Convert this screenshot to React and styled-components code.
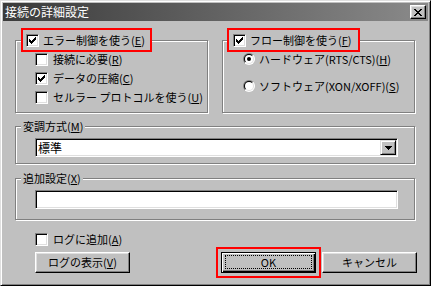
import React, { useId } from "react";
import styled, { createGlobalStyle } from "styled-components";

const GlobalStyle = createGlobalStyle`
  html, body { margin: 0; padding: 0; background: #c0c0c0; }
  body {
    font-family: "Noto Sans CJK JP", "Noto Sans", sans-serif;
    font-size: 11px;
    color: #000;
  }
  *, *::before, *::after { box-sizing: border-box; }
`;

const FACE = "#c0c0c0";

const Window = styled.div`
  width: 431px;
  height: 286px;
  display: flex;
  flex-direction: column;
  background: ${FACE};
  border: 1px solid;
  border-color: #dfdfdf #000 #000 #dfdfdf;
  box-shadow: inset 1px 1px #fff, inset -1px -1px #808080;
  padding: 2px;
  overflow: hidden;
`;

const TitleBar = styled.div`
  height: 18px;
  flex: none;
  display: flex;
  align-items: center;
  justify-content: space-between;
  padding: 0 2px;
  background: linear-gradient(to right, #3a3a3a, #8a8a8a);
`;

const Title = styled.span`
  color: #fff;
  font-size: 12px;
  line-height: 18px;
  white-space: nowrap;
`;

const CloseButton = styled.span`
  width: 16px;
  height: 14px;
  display: flex;
  align-items: center;
  justify-content: center;
  background: ${FACE};
  border: 1px solid;
  border-color: #fff #000 #000 #fff;
  box-shadow: inset -1px -1px #808080, inset 1px 1px #dfdfdf;
`;

const Body = styled.div`
  display: flex;
  flex-direction: column;
  padding: 19px 13px 0 12px;
`;

const TopRow = styled.div`
  display: flex;
  gap: 14px;
`;

const GroupBox = styled.div`
  flex: 1;
  display: flex;
  flex-direction: column;
  border: 1px solid #808080;
  box-shadow: inset 1px 1px #fff, 1px 1px #fff;
  margin-top: ${(p) => p.$mt || 0}px;
  padding-bottom: ${(p) => p.$pb || 0}px;
`;

const CheckCaption = styled.div`
  align-self: flex-start;
  width: ${(p) => p.$w}px;
  height: 24px;
  margin: -13px 0 0 ${(p) => p.$ml}px;
  padding: 0 ${(p) => p.$pl}px;
  display: flex;
  align-items: center;
  gap: 4px;
  background: ${FACE};
  border: 2px solid #f00;
`;

const TextCaption = styled.div`
  align-self: flex-start;
  line-height: 14px;
  margin: -8px 0 0 5px;
  padding: 0 2px;
  background: ${FACE};
  white-space: nowrap;
`;

const OptionList = styled.div`
  display: flex;
  flex-direction: column;
  gap: ${(p) => p.$gap}px;
  margin: 1px 0 0 ${(p) => p.$indent}px;
`;

const OptionRow = styled.div`
  display: flex;
  align-items: center;
  gap: ${(p) => p.$gap}px;
  height: ${(p) => p.$h}px;
`;

const Label = styled.span`
  line-height: 13px;
  white-space: nowrap;
`;

const CheckBox = styled.span`
  width: 13px;
  height: 13px;
  flex: none;
  display: block;
  background: #fff;
  border: 1px solid;
  border-color: #808080 #fff #fff #808080;
  box-shadow: inset 1px 1px #000, inset -1px -1px #dfdfdf;
  svg { display: block; }
`;

const Sunken = styled.div`
  height: 19px;
  display: flex;
  align-items: stretch;
  background: #fff;
  border: 1px solid;
  border-color: #808080 #fff #fff #808080;
  box-shadow: inset 1px 1px #000, inset -1px -1px #dfdfdf;
  padding: 1px;
  margin: 5px 16px 0 19px;
`;

const FieldText = styled.span`
  flex: 1;
  padding-left: 1px;
  line-height: 15px;
  font-size: 12px;
`;

const DropButton = styled.span`
  width: 16px;
  display: flex;
  align-items: center;
  justify-content: center;
  background: ${FACE};
  border: 1px solid;
  border-color: #dfdfdf #000 #000 #dfdfdf;
  box-shadow: inset 1px 1px #fff, inset -1px -1px #808080;
`;

const BottomRow = styled.div`
  display: flex;
  align-items: flex-end;
  justify-content: space-between;
  margin: 13px -2px 0 20px;
`;

const LeftColumn = styled.div`
  display: flex;
  flex-direction: column;
  align-items: flex-start;
  gap: 6px;
  padding-bottom: 5px;
`;

const RightGroup = styled.div`
  display: flex;
  align-items: center;
  gap: 1px;
`;

const Highlight = styled.div`
  border: 2px solid #f00;
  padding: 3px;
  display: flex;
`;

const Button = styled.button`
  width: 95px;
  height: 21px;
  padding: 0;
  font: inherit;
  font-size: 11px;
  color: #000;
  background: ${FACE};
  border: 1px solid;
  border-color: #fff #000 #000 #fff;
  box-shadow: inset -1px -1px #808080, inset 1px 1px #dfdfdf;
  display: flex;
  align-items: center;
  justify-content: center;
  line-height: 13px;
  white-space: nowrap;
`;

const DefaultButton = styled(Button)`
  border: 1px solid #000;
  box-shadow: inset 1px 1px #fff, inset -1px -1px #000, inset -2px -2px #808080;
  padding: 2px 3px 3px 3px;
  align-items: stretch;
`;

const FocusRect = styled.span`
  flex: 1;
  display: flex;
  align-items: center;
  justify-content: center;
  border: 1px dotted #000;
`;

const Check = ({ checked }) => (
  <CheckBox>
    {checked && (
      <svg width="11" height="11" viewBox="0 0 11 11" shapeRendering="crispEdges">
        <path
          fill="#000"
          d="M8 2h1v1h-1z M7 3h2v1h-2z M2 4h1v1h-1z M6 4h3v1h-3z M2 5h2v1h-2z M5 5h3v1h-3z M2 6h5v1h-5z M3 7h3v1h-3z M4 8h1v1h-1z"
        />
      </svg>
    )}
  </CheckBox>
);

const Radio = ({ checked }) => {
  const raw = useId();
  const id = "r" + raw.replace(/[^a-zA-Z0-9]/g, "");
  return (
    <svg width="12" height="12" viewBox="0 0 12 12" style={{ flex: "none", display: "block" }}>
      <defs>
        <linearGradient id={id + "a"} x1="0" y1="0" x2="1" y2="1">
          <stop offset="0.5" stopColor="#808080" />
          <stop offset="0.5" stopColor="#ffffff" />
        </linearGradient>
        <linearGradient id={id + "b"} x1="0" y1="0" x2="1" y2="1">
          <stop offset="0.5" stopColor="#000000" />
          <stop offset="0.5" stopColor="#dfdfdf" />
        </linearGradient>
      </defs>
      <circle cx="6" cy="6" r="6" fill={`url(#${id}a)`} />
      <circle cx="6" cy="6" r="5" fill={`url(#${id}b)`} />
      <circle cx="6" cy="6" r="4" fill="#fff" />
      {checked && <circle cx="6" cy="6" r="2" fill="#000" />}
    </svg>
  );
};

const CloseIcon = () => (
  <svg width="8" height="7" viewBox="0 0 8 7" shapeRendering="crispEdges">
    <path
      fill="#000"
      d="M0 0h2v1h-2z M6 0h2v1h-2z M1 1h2v1h-2z M5 1h2v1h-2z M2 2h4v1h-4z M3 3h2v1h-2z M2 4h4v1h-4z M1 5h2v1h-2z M5 5h2v1h-2z M0 6h2v1h-2z M6 6h2v1h-2z"
    />
  </svg>
);

const DownArrow = () => (
  <svg width="7" height="4" viewBox="0 0 7 4" shapeRendering="crispEdges">
    <path fill="#000" d="M0 0h7v1h-7z M1 1h5v1h-5z M2 2h3v1h-3z M3 3h1v1h-1z" />
  </svg>
);

const CheckOption = ({ checked, children }) => (
  <OptionRow $gap={5} $h={13}>
    <Check checked={checked} />
    <Label>{children}</Label>
  </OptionRow>
);

const RadioOption = ({ checked, children }) => (
  <OptionRow $gap={4} $h={12}>
    <Radio checked={checked} />
    <Label>{children}</Label>
  </OptionRow>
);

export default function App() {
  return (
    <>
      <GlobalStyle />
      <Window>
        <TitleBar>
          <Title>接続の詳細設定</Title>
          <CloseButton>
            <CloseIcon />
          </CloseButton>
        </TitleBar>
        <Body>
          <TopRow>
            <GroupBox $pb={8}>
              <CheckCaption $w={131} $ml={5} $pl={3}>
                <Check checked />
                <Label>
                  エラー制御を使う(<u>E</u>)
                </Label>
              </CheckCaption>
              <OptionList $gap={6} $indent={19}>
                <CheckOption>
                  接続に必要(<u>R</u>)
                </CheckOption>
                <CheckOption checked>
                  データの圧縮(<u>C</u>)
                </CheckOption>
                <CheckOption>
                  セルラー プロトコルを使う(<u>U</u>)
                </CheckOption>
              </OptionList>
            </GroupBox>
            <GroupBox $pb={8}>
              <CheckCaption $w={133} $ml={4} $pl={4}>
                <Check checked />
                <Label>
                  フロー制御を使う(<u>F</u>)
                </Label>
              </CheckCaption>
              <OptionList $gap={15} $indent={20}>
                <RadioOption checked>
                  ハードウェア(RTS/CTS)(<u>H</u>)
                </RadioOption>
                <RadioOption>
                  ソフトウェア(XON/XOFF)(<u>S</u>)
                </RadioOption>
              </OptionList>
            </GroupBox>
          </TopRow>

          <GroupBox $mt={13} $pb={6}>
            <TextCaption>
              変調方式(<u>M</u>)
            </TextCaption>
            <Sunken>
              <FieldText>標準</FieldText>
              <DropButton>
                <DownArrow />
              </DropButton>
            </Sunken>
          </GroupBox>

          <GroupBox $mt={14} $pb={10}>
            <TextCaption>
              追加設定(<u>X</u>)
            </TextCaption>
            <Sunken>
              <FieldText />
            </Sunken>
          </GroupBox>

          <BottomRow>
            <LeftColumn>
              <CheckOption>
                ログに追加(<u>A</u>)
              </CheckOption>
              <Button>
                ログの表示(<u>V</u>)
              </Button>
            </LeftColumn>
            <RightGroup>
              <Highlight>
                <DefaultButton>
                  <FocusRect>OK</FocusRect>
                </DefaultButton>
              </Highlight>
              <Button>キャンセル</Button>
            </RightGroup>
          </BottomRow>
        </Body>
      </Window>
    </>
  );
}
